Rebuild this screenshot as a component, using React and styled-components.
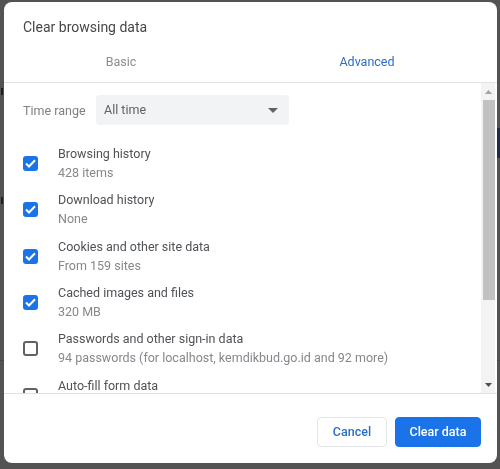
import React from "react";
import styled, { createGlobalStyle } from "styled-components";

const Global = createGlobalStyle`
  html, body { margin: 0; padding: 0; background: #535353; }
  #root { width: 500px; height: 469px; overflow: hidden; }
  * { box-sizing: border-box; }
`;

const Backdrop = styled.div`
  width: 500px;
  height: 469px;
  padding: 2px 3px 6px 4px;
  font-family: Roboto, "Liberation Sans", sans-serif;
  filter: blur(0.35px);
  background-color: #535353;
  background-image:
    linear-gradient(#1c2c52, #1c2c52),
    linear-gradient(#1e1e1e, #1e1e1e),
    linear-gradient(#1e1e1e, #1e1e1e),
    linear-gradient(#464646, #464646),
    linear-gradient(#464646, #464646);
  background-repeat: no-repeat;
  background-size: 3px 30px, 2px 7px, 2px 7px, 4px 1px, 3px 1px;
  background-position: 497px 128px, 1px 88px, 1px 197px, 0 360px, 497px 360px;
`;

const Dialog = styled.div`
  width: 493px;
  height: 461px;
  background: #fff;
  border-radius: 8px;
  display: flex;
  flex-direction: column;
  overflow: hidden;
`;

const Title = styled.h1`
  margin: 0;
  padding: 16px 19px 0;
  height: 46px;
  font-size: 14px;
  line-height: 18px;
  font-weight: 400;
  color: #44474a;
`;

const Tabs = styled.div`
  height: 35px;
  padding-left: 57px;
  display: flex;
  gap: 126px;
  border-bottom: 1px solid #e0e0e0;
`;

const Tab = styled.div`
  width: 120px;
  height: 28px;
  text-align: center;
  font-size: 12.5px;
  line-height: 28px;
  color: ${(p) => (p.$active ? "#2a6fc4" : "#8a8d90")};
`;

const Body = styled.div`
  height: 311px;
  display: flex;
  border-bottom: 1px solid #e0e0e0;
  overflow: hidden;
`;

const Content = styled.div`
  flex: 1;
  min-width: 0;
  padding: 12px 0 0 19px;
  overflow: hidden;
`;

const RangeRow = styled.div`
  display: flex;
  align-items: center;
  gap: 12px;
  margin-bottom: 19px;
`;

const RangeLabel = styled.span`
  font-size: 12.5px;
  color: #7d8185;
  width: 61px;
  white-space: nowrap;
`;

const Select = styled.div`
  width: 193px;
  height: 30px;
  background: #f1f3f4;
  border-radius: 4px;
  padding: 0 11px 1px 8px;
  display: flex;
  align-items: center;
  justify-content: space-between;
  font-size: 12.5px;
  color: #5f6368;
`;

const Caret = styled.svg`
  width: 10px;
  height: 5px;
  margin-top: 1px;
  fill: #5f6368;
`;

const Row = styled.div`
  display: flex;
  height: 46.35px;
`;

const Box = styled.div`
  width: 15px;
  height: 15px;
  margin: 12px 20px 0 0;
  flex: none;
  border-radius: 3px;
  display: flex;
  align-items: center;
  justify-content: center;
  background: ${(p) => (p.$on ? "#1a73e8" : "#fff")};
  border: ${(p) => (p.$on ? "none" : "2px solid #5f6368")};
`;

const Check = styled.svg`
  width: 11px;
  height: 9px;
  fill: none;
  stroke: #fff;
  stroke-width: 2;
`;

const Texts = styled.div`
  min-width: 0;
  white-space: nowrap;
`;

const Label = styled.div`
  font-size: 12.5px;
  line-height: 19px;
  color: #4f5256;
`;

const Sub = styled.div`
  font-size: 12.5px;
  line-height: 19px;
  color: #85888c;
`;

const Scrollbar = styled.div`
  width: 14px;
  margin-right: 2px;
  background: #f3f3f3;
  display: flex;
  flex-direction: column;
`;

const ArrowCell = styled.div`
  height: 17px;
  flex: none;
  display: flex;
  align-items: center;
  justify-content: center;
`;

const Arrow = styled.svg`
  width: 7px;
  height: 4px;
  fill: ${(p) => p.$color};
`;

const Thumb = styled.div`
  height: 200px;
  flex: none;
  margin-left: 2px;
  background: #c1c1c1;
`;

const Track = styled.div`
  flex: 1;
`;

const Footer = styled.div`
  flex: 1;
  display: flex;
  justify-content: flex-end;
  gap: 8px;
  padding: 23px 16px 0 0;
`;

const Button = styled.button`
  height: 30px;
  width: ${(p) => (p.$primary ? "86px" : "70px")};
  padding: 0 0 1px;
  border-radius: 4px;
  font-family: inherit;
  font-size: 12.5px;
  font-weight: 500;
  border: 1px solid ${(p) => (p.$primary ? "#1a73e8" : "#e3e5e8")};
  background: ${(p) => (p.$primary ? "#1a73e8" : "#fff")};
  color: ${(p) => (p.$primary ? "#fff" : "#2a6fc4")};
`;

const items = [
  ["Browsing history", "428 items", true],
  ["Download history", "None", true],
  ["Cookies and other site data", "From 159 sites", true],
  ["Cached images and files", "320 MB", true],
  ["Passwords and other sign-in data", "94 passwords (for localhost, kemdikbud.go.id and 92 more)", false],
  ["Auto-fill form data", "", false],
];

export default function App() {
  return (
    <Backdrop>
      <Global />
      <Dialog>
        <Title>Clear browsing data</Title>
        <Tabs>
          <Tab>Basic</Tab>
          <Tab $active>Advanced</Tab>
        </Tabs>
        <Body>
          <Content>
            <RangeRow>
              <RangeLabel>Time range</RangeLabel>
              <Select>
                All time
                <Caret viewBox="0 0 10 5"><path d="M0 0h10L5 5z" /></Caret>
              </Select>
            </RangeRow>
            {items.map(([label, sub, on]) => (
              <Row key={label}>
                <Box $on={on}>
                  {on && (
                    <Check viewBox="0 0 11 9"><path d="M1 4.5 4 7.5 10 1.2" /></Check>
                  )}
                </Box>
                <Texts>
                  <Label>{label}</Label>
                  <Sub>{sub}</Sub>
                </Texts>
              </Row>
            ))}
          </Content>
          <Scrollbar>
            <ArrowCell>
              <Arrow $color="#a3a3a3" viewBox="0 0 7 4"><path d="M3.5 0 7 4H0z" /></Arrow>
            </ArrowCell>
            <Thumb />
            <Track />
            <ArrowCell>
              <Arrow $color="#505050" viewBox="0 0 7 4"><path d="M0 0h7L3.5 4z" /></Arrow>
            </ArrowCell>
          </Scrollbar>
        </Body>
        <Footer>
          <Button>Cancel</Button>
          <Button $primary>Clear data</Button>
        </Footer>
      </Dialog>
    </Backdrop>
  );
}
